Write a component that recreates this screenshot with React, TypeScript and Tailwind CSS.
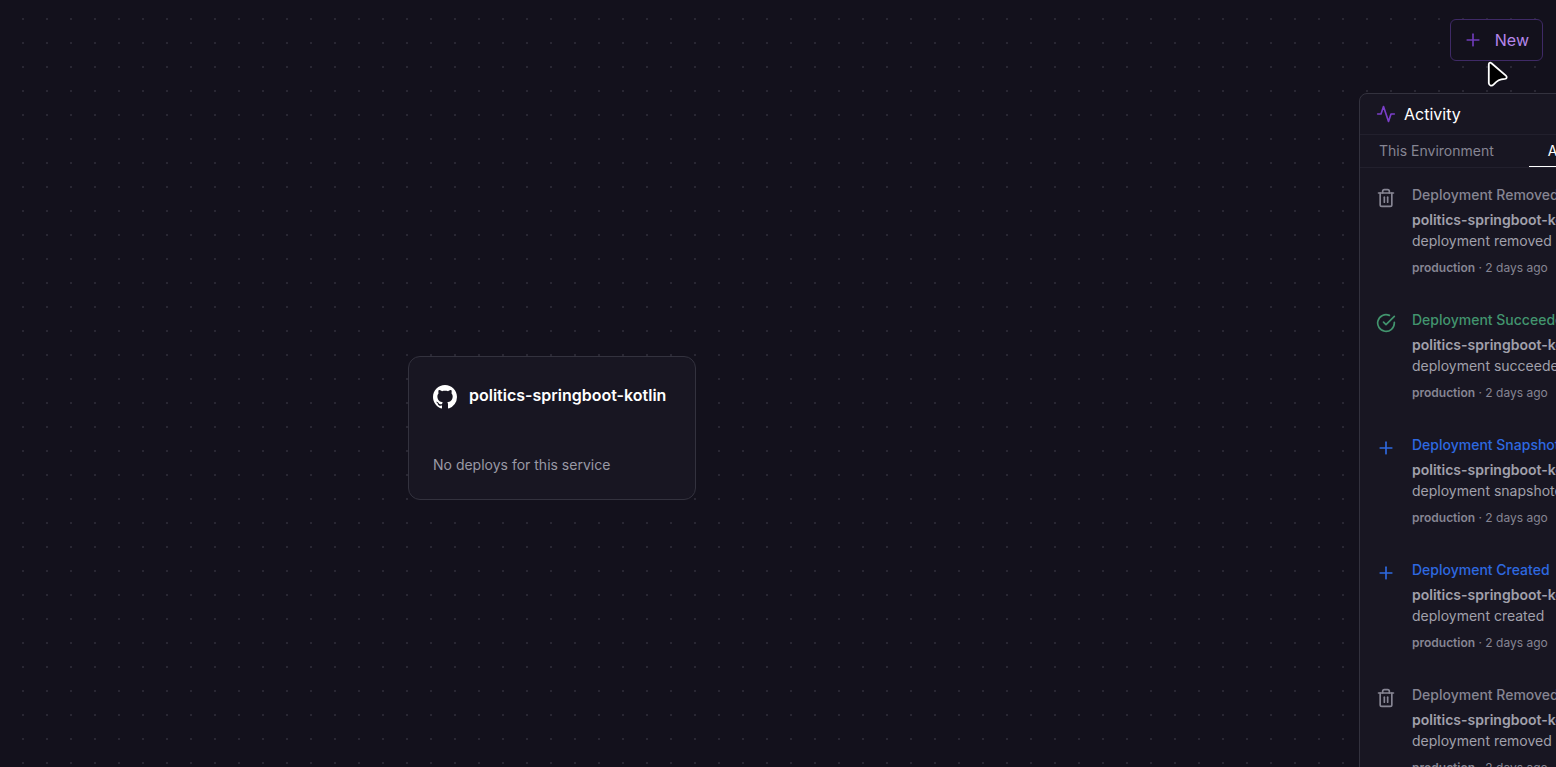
import { Plus, Trash2 } from "lucide-react";
import type { ReactNode } from "react";

type Kind = "removed" | "succeeded" | "snapshoted" | "created";

const events: { kind: Kind; title: string; text: string }[] = [
  { kind: "removed", title: "Deployment Removed", text: "deployment removed" },
  { kind: "succeeded", title: "Deployment Succeeded", text: "deployment succeeded" },
  { kind: "snapshoted", title: "Deployment Snapshoted", text: "deployment snapshoted" },
  { kind: "created", title: "Deployment Created", text: "deployment created" },
  { kind: "removed", title: "Deployment Removed", text: "deployment removed" },
];

const tones: Record<Kind, string> = {
  removed: "text-[#868593]",
  succeeded: "text-[#42946e]",
  snapshoted: "text-[#2e69e0]",
  created: "text-[#2e69e0]",
};

function LineIcon({ className, children }: { className: string; children: ReactNode }) {
  return (
    <svg
      className={className}
      viewBox="0 0 24 24"
      fill="none"
      stroke="currentColor"
      strokeWidth="2"
      strokeLinecap="round"
      strokeLinejoin="round"
      aria-hidden="true"
    >
      {children}
    </svg>
  );
}

function EventIcon({ kind }: { kind: Kind }) {
  if (kind === "removed") return <Trash2 className="size-5" />;
  if (kind === "succeeded")
    return (
      <LineIcon className="size-5">
        <path d="M22 11.08V12a10 10 0 1 1-5.93-9.14" />
        <path d="M22 4 12 14.01l-3-3" />
      </LineIcon>
    );
  return <Plus className="size-5" />;
}

function GithubMark() {
  return (
    <svg className="size-6 shrink-0" viewBox="0 0 16 16" fill="currentColor" aria-hidden="true">
      <path
        fillRule="evenodd"
        d="M8 0C3.58 0 0 3.58 0 8c0 3.54 2.29 6.53 5.47 7.59.4.07.55-.17.55-.38 0-.19-.01-.82-.01-1.49-2.01.37-2.53-.49-2.69-.94-.09-.23-.48-.94-.82-1.13-.28-.15-.68-.52-.01-.53.63-.01 1.08.58 1.23.82.72 1.21 1.87.87 2.33.66.07-.52.28-.87.51-1.07-1.78-.2-3.64-.89-3.64-3.95 0-.87.31-1.59.82-2.15-.08-.2-.36-1.02.08-2.12 0 0 .67-.21 2.2.82.64-.18 1.32-.27 2-.27s1.36.09 2 .27c1.53-1.04 2.2-.82 2.2-.82.44 1.1.16 1.92.08 2.12.51.56.82 1.27.82 2.15 0 3.07-1.87 3.75-3.65 3.95.29.25.54.73.54 1.48 0 1.07-.01 1.93-.01 2.2 0 .21.15.46.55.38A8.01 8.01 0 0 0 16 8c0-4.42-3.58-8-8-8z"
      />
    </svg>
  );
}

function Cursor() {
  return (
    <svg
      className="pointer-events-none absolute top-[60px] right-[46px] h-7 w-6"
      viewBox="0 0 24 28"
      fill="#000"
      stroke="#fff"
      strokeWidth="1.8"
      strokeLinejoin="round"
      aria-hidden="true"
    >
      <path d="M2.8 4.2C2.8 2.6 4.4 2.2 5.5 3.3L19.9 15.6C21.3 16.9 20.8 18.7 18.9 18.9C13.5 19.2 11.4 20.3 7.7 24.4C5.8 26.4 3.2 26 2.8 23.2Z" />
    </svg>
  );
}

function DotGrid() {
  return (
    <svg className="absolute inset-0 size-full" aria-hidden="true">
      <defs>
        <pattern id="dots" width="24" height="24" patternUnits="userSpaceOnUse">
          <rect x="22" y="18" width="2" height="2" fill="#292733" />
        </pattern>
      </defs>
      <rect width="100%" height="100%" fill="url(#dots)" />
    </svg>
  );
}

function ServiceCard() {
  return (
    <article className="absolute top-[356px] left-[408px] flex h-36 w-72 flex-col justify-between rounded-xl border border-[#33323e] bg-[#181622] p-6">
      <div className="flex items-center gap-3 text-white">
        <div className="pt-1">
          <GithubMark />
        </div>
        <h2 className="text-base font-semibold">politics-springboot-kotlin</h2>
      </div>
      <p className="text-sm text-[#9a99a5]">No deploys for this service</p>
    </article>
  );
}

function ActivityPanel() {
  return (
    <aside className="w-80 shrink-0 rounded-tl-lg border border-[#33323e] bg-[#181622]">
      <div className="flex h-10 items-center gap-2 px-4 text-white">
        <LineIcon className="size-5 text-[#7a3fc8]">
          <path d="M22 12h-4l-3 9L9 3l-3 9H2" />
        </LineIcon>
        <h2 className="text-base">Activity</h2>
      </div>
      <div role="tablist" className="flex h-[34px] gap-4 border-y border-[#22202d] text-sm">
        <button type="button" role="tab" aria-selected="false" className="px-[19px] text-[#868593]">
          This Environment
        </button>
        <button
          type="button"
          role="tab"
          aria-selected="true"
          className="border-b border-white px-[19px] text-white"
        >
          All
        </button>
      </div>
      <ul>
        {events.map((e, i) => (
          <li key={i} className="flex h-[125px] gap-4 px-4 pt-4">
            <div className={`pt-1 ${tones[e.kind]}`}>
              <EventIcon kind={e.kind} />
            </div>
            <div>
              <h3 className={`text-sm leading-[21px] font-medium ${tones[e.kind]}`}>{e.title}</h3>
              <p className="mt-1 text-sm leading-[21px] text-[#a1a0ab]">
                <strong className="font-semibold">politics-springboot-kotlin</strong>
                <br />
                {e.text}
              </p>
              <p className="mt-2 text-xs leading-[18px] text-[#868593]">
                <strong className="font-semibold">production</strong> · 2 days ago
              </p>
            </div>
          </li>
        ))}
      </ul>
    </aside>
  );
}

export default function App() {
  return (
    <main className="relative flex h-screen justify-end overflow-hidden bg-[#13111c] font-['Inter',sans-serif]">
      <DotGrid />
      <ServiceCard />
      <div className="relative flex w-[197px] shrink-0 flex-col gap-8 pt-[19px]">
        <button
          type="button"
          className="mr-[13px] flex h-[42px] shrink-0 items-center gap-3 self-end rounded-md border border-[#3f2a66] bg-[#13111c] pr-[13px] pl-3 text-base text-[#b586ea]"
        >
          <Plus className="size-5 text-[#6f3bb8]" />
          New
        </button>
        <ActivityPanel />
      </div>
      <Cursor />
    </main>
  );
}
